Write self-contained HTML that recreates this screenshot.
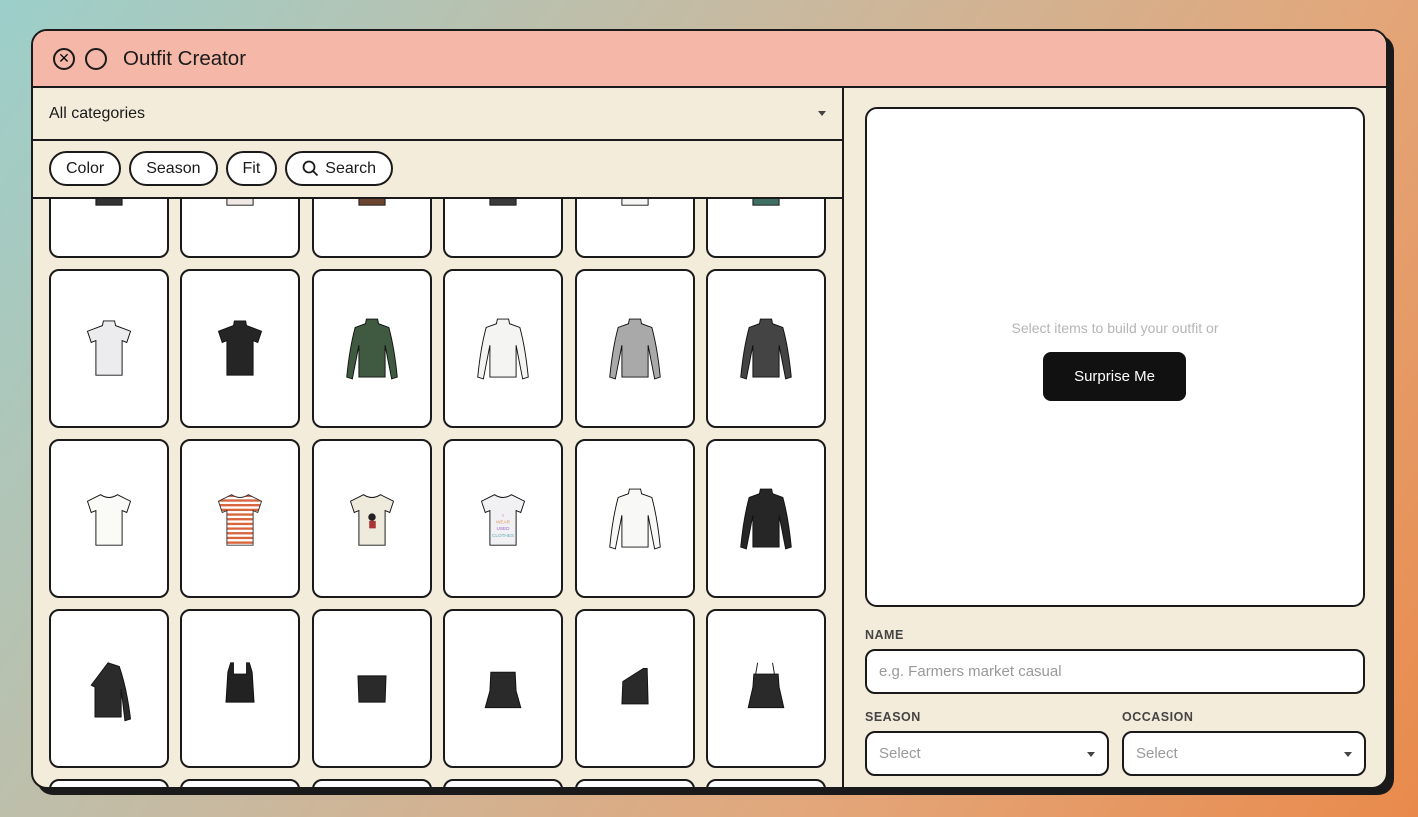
<!DOCTYPE html>
<html><head><meta charset="utf-8"><style>
*{box-sizing:border-box;margin:0;padding:0}
body{width:1418px;height:817px;overflow:hidden;font-family:"Liberation Sans",sans-serif;
background:linear-gradient(125deg,#9ccfca 0%,#c9b99f 40%,#e3a679 70%,#e98a4c 100%);position:relative}
.win{position:absolute;left:31px;top:29px;width:1357px;height:760px;background:#f4ecda;border:2.5px solid #1a1a1a;border-radius:16px;box-shadow:6px 6px 0 #1a1a1a;overflow:hidden}
.title{position:absolute;left:0;top:0;right:0;height:57px;background:#f5b8a8;border-bottom:2px solid #1a1a1a}
.title .t{position:absolute;left:90px;top:16px;font-size:20.5px;color:#1a1a1a}
.circ{position:absolute;top:17px;width:22px;height:22px;border:2px solid #1a1a1a;border-radius:50%}
.left{position:absolute;left:0;top:57px;width:811px;bottom:0;border-right:2px solid #1a1a1a}
.cat{height:53px;border-bottom:2px solid #1a1a1a;font-size:16px;padding:17px 16px;position:relative;color:#1a1a1a}
.cat:after{content:"";position:absolute;right:16px;top:23px;border:4px solid transparent;border-top:5px solid #444}
.filters{height:58px;border-bottom:2px solid #1a1a1a;padding:10px 16px;display:flex;gap:8px}
.pill{height:35px;border:2px solid #1a1a1a;border-radius:18px;background:#fff;font-size:16px;padding:7px 15px;color:#1a1a1a;display:flex;align-items:center;gap:6px}
.scroll{position:absolute;top:111px;left:0;right:0;bottom:0;overflow:hidden}
.grid{position:absolute;left:16px;top:-100px;display:grid;grid-template-columns:repeat(6,120px);column-gap:11.4px;row-gap:11px;grid-auto-rows:159px}
.card{background:#fff;border:2px solid #1a1a1a;border-radius:10px;display:flex;align-items:center;justify-content:center}
.card svg{width:58px;height:68px}
.right{position:absolute;left:813px;top:56px;right:0;bottom:0}
.prev{position:absolute;left:19px;top:20px;width:500px;height:500px;background:#fff;border:2px solid #1a1a1a;border-radius:12px}
.prev .msg{position:absolute;top:211px;width:100%;text-align:center;color:#b5b5b5;font-size:14px}
.btn{position:absolute;left:176px;top:243px;width:143px;height:49px;background:#111;border-radius:8px;color:#fff;font-size:15px;text-align:center;line-height:49px}
.lab{position:absolute;font-size:12.5px;font-weight:bold;color:#444;letter-spacing:.5px}
.inp{position:absolute;height:45px;background:#fff;border:2px solid #1a1a1a;border-radius:10px;color:#999;font-size:15px;padding:12px 12px}
.sel:after{content:"";position:absolute;right:12px;top:19px;border:4px solid transparent;border-top:5px solid #444}
</style></head><body>
<svg width="0" height="0" style="position:absolute">
<defs>
<path id="tee" d="M22 10 Q31 16 40 10 L54 17 L50 29 L45 27 L45 64 L17 64 L17 27 L12 29 L8 17 Z"/>
<path id="ttee" d="M25 6 L37 6 L38 11 L54 17 L50 29 L45 27 L45 64 L17 64 L17 27 L12 29 L8 17 L24 11 Z"/>
<path id="long" d="M25 4 L37 4 L38 9 L49 13 Q55 35 58 66 L52 68 L45 32 L45 66 L17 66 L17 32 L10 68 L4 66 Q7 35 13 13 L24 9 Z"/>
<path id="one" d="M30 8 L42 12 Q50 35 54 68 L48 70 L44 36 L44 66 L16 66 L16 34 L12 32 Z"/>
<path id="tank" d="M18 18 L21 8 L24 8 L24 20 L38 20 L38 8 L41 8 L44 18 L46 50 L16 50 Z"/>
<path id="tube" d="M16 22 L46 22 L45 50 L17 50 Z"/>
<path id="peplum" d="M18 18 L44 18 L45 38 L50 56 L12 56 L17 38 Z"/>
<path id="asym" d="M18 28 L40 14 L44 14 L45 52 L17 52 Z"/>
<path id="cami" d="M20 20 L22 8 M40 20 L38 8 M18 20 L44 20 L45 34 L50 56 L12 56 L17 34 Z"/>
</defs></svg>
<div class="win">
<div class="title"><div class="circ" style="left:20px;font-size:14px;line-height:17px;text-align:center">✕</div><div class="circ" style="left:52px"></div><div class="t">Outfit Creator</div></div>
<div class="left">
<div class="cat">All categories</div>
<div class="filters"><div class="pill">Color</div><div class="pill">Season</div><div class="pill">Fit</div><div class="pill"><svg width="17" height="17" viewBox="0 0 17 17"><circle cx="7" cy="7" r="5.5" fill="none" stroke="#1a1a1a" stroke-width="1.8"/><path d="M11 11 L15.5 15.5" stroke="#1a1a1a" stroke-width="1.8"/></svg>Search</div></div>
<div class="scroll"><div class="grid">
<div class="card"><svg viewBox="0 0 62 72"><use href="#tee" fill="#333" stroke="#111"/></svg></div>
<div class="card"><svg viewBox="0 0 62 72"><use href="#tee" fill="#f0e8e4" stroke="#111"/></svg></div>
<div class="card"><svg viewBox="0 0 62 72"><use href="#tee" fill="#6b4530" stroke="#111"/></svg></div>
<div class="card"><svg viewBox="0 0 62 72"><use href="#tee" fill="#3a3a3a" stroke="#111"/></svg></div>
<div class="card"><svg viewBox="0 0 62 72"><use href="#tee" fill="#f6f6f4" stroke="#111"/></svg></div>
<div class="card"><svg viewBox="0 0 62 72"><use href="#tee" fill="#3f6f62" stroke="#111"/></svg></div>

<div class="card"><svg viewBox="0 0 62 72"><use href="#ttee" fill="#ecebee" stroke="#111"/></svg></div>
<div class="card"><svg viewBox="0 0 62 72"><use href="#ttee" fill="#252525" stroke="#111"/></svg></div>
<div class="card"><svg viewBox="0 0 62 72"><use href="#long" fill="#3f5a40" stroke="#111"/></svg></div>
<div class="card"><svg viewBox="0 0 62 72"><use href="#long" fill="#f4f4f2" stroke="#111"/></svg></div>
<div class="card"><svg viewBox="0 0 62 72"><use href="#long" fill="#a9a9a9" stroke="#111"/></svg></div>
<div class="card"><svg viewBox="0 0 62 72"><use href="#long" fill="#444" stroke="#111"/></svg></div>

<div class="card"><svg viewBox="0 0 62 72"><use href="#tee" fill="#fafaf6" stroke="#111"/></svg></div>
<div class="card"><svg viewBox="0 0 62 72"><defs><pattern id="st" width="4" height="5" patternUnits="userSpaceOnUse"><rect width="4" height="5" fill="#fff"/><rect width="4" height="2.5" fill="#d9653e"/></pattern></defs><use href="#tee" fill="url(#st)" stroke="#333"/></svg></div>
<div class="card"><svg viewBox="0 0 62 72"><use href="#tee" fill="#eeebdc" stroke="#111"/><circle cx="31" cy="34" r="4" fill="#222"/><rect x="28" y="38" width="7" height="8" fill="#a33"/></svg></div>
<div class="card"><svg viewBox="0 0 62 72"><use href="#tee" fill="#f1f1f3" stroke="#111"/><text x="31" y="34" font-size="5" text-anchor="middle" fill="#c6a">I</text><text x="31" y="41" font-size="5" text-anchor="middle" fill="#d96">WEAR</text><text x="31" y="48" font-size="5" text-anchor="middle" fill="#96c">USED</text><text x="31" y="55" font-size="5" text-anchor="middle" fill="#6ab">CLOTHES</text></svg></div>
<div class="card"><svg viewBox="0 0 62 72"><use href="#long" fill="#f8f8f6" stroke="#111"/></svg></div>
<div class="card"><svg viewBox="0 0 62 72"><use href="#long" fill="#262626" stroke="#111"/></svg></div>

<div class="card"><svg viewBox="0 0 62 72"><use href="#one" fill="#2b2b2b" stroke="#111"/></svg></div>
<div class="card"><svg viewBox="0 0 62 72"><use href="#tank" fill="#222" stroke="#111"/></svg></div>
<div class="card"><svg viewBox="0 0 62 72"><use href="#tube" fill="#2a2a2a" stroke="#111"/></svg></div>
<div class="card"><svg viewBox="0 0 62 72"><use href="#peplum" fill="#2a2a2a" stroke="#111"/></svg></div>
<div class="card"><svg viewBox="0 0 62 72"><use href="#asym" fill="#2a2a2a" stroke="#111"/></svg></div>
<div class="card"><svg viewBox="0 0 62 72"><use href="#cami" fill="#2a2a2a" stroke="#111"/></svg></div>

<div class="card"></div><div class="card"></div><div class="card"></div><div class="card"></div><div class="card"></div><div class="card"></div>
</div></div>
</div>
<div class="right">
<div class="prev"><div class="msg">Select items to build your outfit or</div><div class="btn">Surprise Me</div></div>
<div class="lab" style="left:19px;top:541px">NAME</div>
<div class="inp" style="left:19px;top:562px;width:500px">e.g. Farmers market casual</div>
<div class="lab" style="left:19px;top:623px">SEASON</div>
<div class="lab" style="left:276px;top:623px">OCCASION</div>
<div class="inp sel" style="left:19px;top:644px;width:244px">Select</div>
<div class="inp sel" style="left:276px;top:644px;width:244px">Select</div>
</div>
</div>
</body></html>
